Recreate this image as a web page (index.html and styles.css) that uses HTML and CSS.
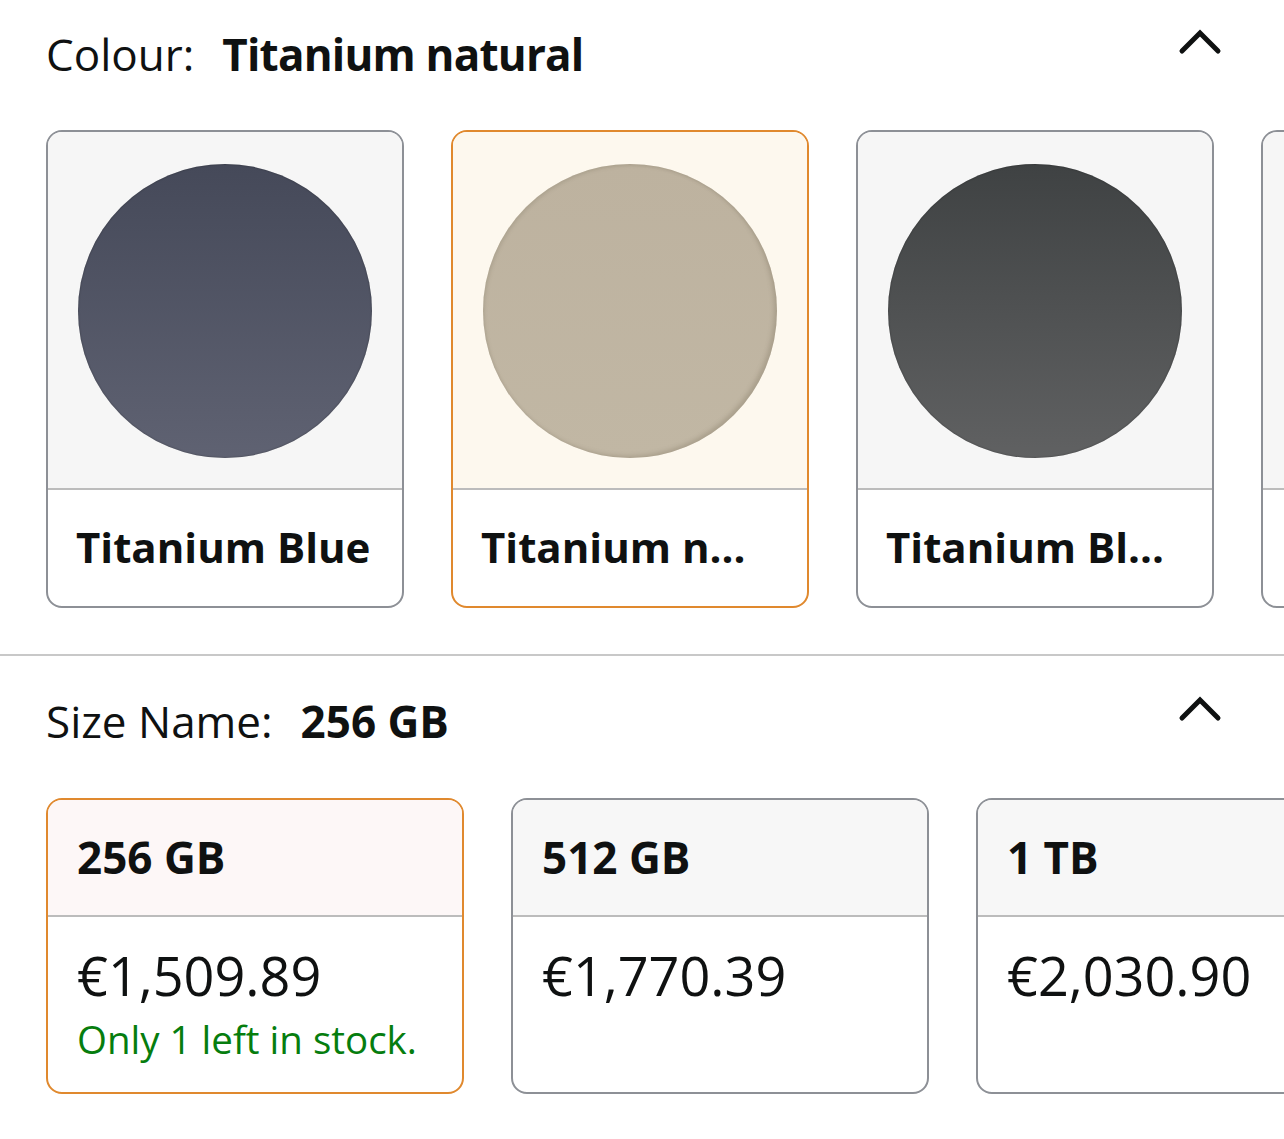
FILE: index.html
```html
<!DOCTYPE html>
<html>
<head>
<meta charset="utf-8">
<link rel="stylesheet" href="styles.css">
</head>
<body>
<div class="page">
  <section class="variation">
    <div class="var-head">
      <div class="var-title"><span class="var-label">Colour:</span><span class="var-value">Titanium natural</span></div>
      <svg class="chevron" viewBox="0 0 44 26" width="44" height="26"><path d="M4 22 L22 4 L40 22" fill="none" stroke="#0f1111" stroke-width="5" stroke-linecap="round" stroke-linejoin="miter"/></svg>
    </div>
    <div class="swatch-row">
      <div class="swatch">
        <div class="swatch-img"><div class="dot dot-blue"></div></div>
        <div class="swatch-name">Titanium Blue</div>
      </div>
      <div class="swatch selected">
        <div class="swatch-img"><div class="dot dot-natural"></div></div>
        <div class="swatch-name">Titanium n...</div>
      </div>
      <div class="swatch">
        <div class="swatch-img"><div class="dot dot-black"></div></div>
        <div class="swatch-name">Titanium Bl...</div>
      </div>
      <div class="swatch">
        <div class="swatch-img"></div>
        <div class="swatch-name"></div>
      </div>
    </div>
  </section>
  <div class="sep"></div>
  <section class="variation size-section">
    <div class="var-head">
      <div class="var-title"><span class="var-label">Size Name:</span><span class="var-value">256 GB</span></div>
      <svg class="chevron" viewBox="0 0 44 26" width="44" height="26"><path d="M4 22 L22 4 L40 22" fill="none" stroke="#0f1111" stroke-width="5" stroke-linecap="round" stroke-linejoin="miter"/></svg>
    </div>
    <div class="size-row">
      <div class="size-card selected">
        <div class="size-name">256 GB</div>
        <div class="size-body">
          <div class="price">€1,509.89</div>
          <div class="stock">Only 1 left in stock.</div>
        </div>
      </div>
      <div class="size-card">
        <div class="size-name">512 GB</div>
        <div class="size-body">
          <div class="price">€1,770.39</div>
        </div>
      </div>
      <div class="size-card">
        <div class="size-name">1 TB</div>
        <div class="size-body">
          <div class="price">€2,030.90</div>
        </div>
      </div>
    </div>
  </section>
</div>
</body>
</html>
```

FILE: styles.css
```css
html, body {
  margin: 0;
  padding: 0;
  background: #ffffff;
}
body {
  font-family: "Open Sans", "Noto Sans", sans-serif;
  color: #0f1111;
  width: 1284px;
  height: 1139px;
  overflow: hidden;
}
.page {
  width: 1284px;
}
.variation {
  padding-left: 46px;
  overflow: hidden;
}
.var-head {
  display: flex;
  justify-content: space-between;
  align-items: center;
  padding-right: 62px;
  height: 60px;
  padding-top: 24px;
  margin-bottom: 46px;
}
.var-title {
  font-size: 44px;
  line-height: 60px;
  white-space: nowrap;
}
.var-label {
  margin-right: 28px;
}
.var-value {
  font-weight: 700;
}
.variation:first-child .var-value {
  letter-spacing: -0.8px;
}
.chevron {
  display: block;
  margin-top: -24px;
}
.swatch-row,
.size-row {
  display: flex;
  gap: 47px;
  width: max-content;
}
.swatch {
  width: 354px;
  border: 2px solid #8d9096;
  border-radius: 16px;
  overflow: hidden;
  background: #ffffff;
  flex: none;
}
.swatch.selected {
  border-color: #e0892e;
}
.swatch-img {
  height: 356px;
  background: #f6f6f6;
  border-bottom: 2px solid #bcbcbc;
  display: flex;
  align-items: center;
  justify-content: center;
}
.swatch.selected .swatch-img {
  background: #fdf8ee;
}
.dot {
  width: 294px;
  height: 294px;
  border-radius: 50%;
  margin-top: 2px;
}
.dot-blue {
  background: linear-gradient(#454959, #5f6272);
  box-shadow: inset 0 0 2px rgba(0,0,0,0.4);
}
.dot-natural {
  background: linear-gradient(#bdb29f, #c1b7a4);
  box-shadow: inset -3px -2px 4px rgba(120,110,90,0.3), inset 2px 2px 3px rgba(140,130,110,0.25);
}
.dot-black {
  background: linear-gradient(#3f4243, #606162);
  box-shadow: inset 0 0 2px rgba(0,0,0,0.4);
}
.swatch-name {
  height: 116px;
  box-sizing: border-box;
  padding: 0 28px;
  font-size: 42px;
  font-weight: 700;
  line-height: 114px;
  white-space: nowrap;
  overflow: hidden;
}
.sep {
  height: 2px;
  background: #c8c8c8;
  margin-top: 46px;
}
.size-section .var-head {
  margin-bottom: 47px;
  padding-top: 35px;
}
.size-card {
  width: 414px;
  height: 292px;
  border: 2px solid #8d9096;
  border-radius: 16px;
  overflow: hidden;
  background: #ffffff;
  flex: none;
}
.size-card.selected {
  border-color: #e0892e;
}
.size-name {
  height: 117px;
  box-sizing: border-box;
  background: #f7f7f7;
  border-bottom: 2px solid #bcbcbc;
  padding: 0 29px;
  font-size: 44px;
  font-weight: 700;
  line-height: 115px;
}
.size-card.selected .size-name {
  background: #fdf7f7;
}
.size-body {
  padding: 21px 29px 0;
}
.price {
  font-size: 54px;
  line-height: 74px;
}
.stock {
  margin-top: 2px;
  font-size: 38.5px;
  line-height: 50px;
  color: #067d0e;
}
```
